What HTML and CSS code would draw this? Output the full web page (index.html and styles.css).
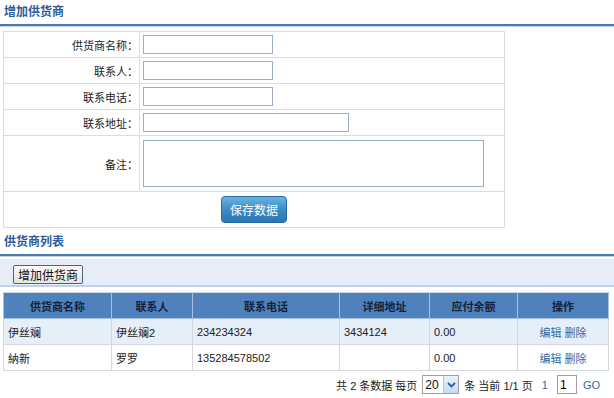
FILE: index.html
```html
<!DOCTYPE html>
<html lang="zh-CN">
<head>
    <meta charset="UTF-8">
    <title>供货商管理</title>
    <link rel="stylesheet" href="styles.css">
</head>
<body>
    <div class="section-title">增加供货商</div>
    <table class="form-table">
        <tr>
            <td class="label">供货商名称：</td>
            <td><input type="text" class="txt"></td>
        </tr>
        <tr>
            <td class="label">联系人：</td>
            <td><input type="text" class="txt"></td>
        </tr>
        <tr>
            <td class="label">联系电话：</td>
            <td><input type="text" class="txt"></td>
        </tr>
        <tr>
            <td class="label">联系地址：</td>
            <td><input type="text" class="txt txt-long"></td>
        </tr>
        <tr class="memo-row">
            <td class="label">备注：</td>
            <td><textarea class="memo"></textarea></td>
        </tr>
        <tr class="btn-row">
            <td colspan="2"><button class="btn-save">保存数据</button></td>
        </tr>
    </table>

    <div class="section-title second">供货商列表</div>
    <div class="toolbar">
        <button class="btn-add">增加供货商</button>
    </div>

    <table class="list-table">
        <thead>
            <tr>
                <th class="c1">供货商名称</th>
                <th class="c2">联系人</th>
                <th class="c3">联系电话</th>
                <th class="c4">详细地址</th>
                <th class="c5">应付余额</th>
                <th>操作</th>
            </tr>
        </thead>
        <tbody>
            <tr class="odd">
                <td>伊丝斓</td>
                <td>伊丝斓2</td>
                <td>234234324</td>
                <td>3434124</td>
                <td>0.00</td>
                <td class="ops"><a href="#">编辑</a> <a href="#">删除</a></td>
            </tr>
            <tr>
                <td>納新</td>
                <td>罗罗</td>
                <td>135284578502</td>
                <td></td>
                <td>0.00</td>
                <td class="ops"><a href="#">编辑</a> <a href="#">删除</a></td>
            </tr>
        </tbody>
    </table>

    <div class="pager">
        <span>共 2 条数据</span>
        <span>每页</span>
        <span class="select-wrap">
            <select class="page-size"><option>20</option></select>
            <span class="select-arrow">
                <svg width="9" height="6" viewBox="0 0 9 6"><path d="M1 1 L4.5 4.5 L8 1" fill="none" stroke="#2d5c9c" stroke-width="1.8"/></svg>
            </span>
        </span>
        <span>条</span>
        <span>当前 1/1 页</span>
        <a href="#" class="page-num">1</a>
        <input type="text" class="page-input" value="1">
        <a href="#" class="go">GO</a>
    </div>
</body>
</html>
```

FILE: styles.css
```css
body {
    margin: 0;
    padding: 0 5px 0 3px;
    background: #fff;
    font-family: "Liberation Sans", "Noto Sans CJK SC", sans-serif;
    font-size: 11px;
    color: #222;
}

.section-title {
    height: 24px;
    line-height: 24px;
    margin: 0 -5px 5px -3px;
    padding-left: 4px;
    font-size: 12px;
    font-weight: bold;
    color: #2d5c9c;
    border-bottom: 2px solid #4b78b4;
    box-shadow: 0 1px 0 #c5d5ea;
}
.section-title.second {
    margin-top: 2px;
    margin-bottom: 3px;
}

.form-table {
    width: 502px;
    border-collapse: collapse;
    border: 1px solid #d8d8d8;
}
.form-table td {
    border: 1px solid #dcdcdc;
    height: 25px;
    padding: 0 3px;
}
.form-table td.label {
    width: 131px;
    text-align: right;
    padding-right: 1px;
    color: #222;
}
.txt {
    box-sizing: border-box;
    width: 130px;
    height: 19px;
    border: 1px solid #9bb0c8;
    padding: 0 3px;
    display: block;
}
.txt-long {
    width: 206px;
}
.memo-row td {
    height: 55px;
}
.memo {
    box-sizing: border-box;
    display: block;
    width: 341px;
    height: 47px;
    border: 1px solid #9bb0c8;
    overflow-y: scroll;
    resize: none;
}
.btn-row td {
    height: 35px;
    text-align: center;
}
.btn-save {
    width: 66px;
    height: 27px;
    border: 1px solid #256aa2;
    border-radius: 4px;
    background: linear-gradient(180deg, #6cb4df 0%, #3c8cc6 50%, #2a77b3 100%);
    color: #fff;
    font-family: "Noto Sans CJK SC", sans-serif;
    font-size: 12px;
    padding: 0;
}

.toolbar {
    height: 28px;
    margin: 0 -5px 0 -3px;
    padding: 6px 0 0 13px;
    box-sizing: border-box;
    background: #e6edf6;
    border-bottom: 2px solid #c0d2e8;
}
.btn-add {
    width: 70px;
    height: 19px;
    padding: 0;
    border: 1px solid #4d6480;
    border-radius: 2px;
    background: linear-gradient(180deg, #fbfbfb, #e4e4e4);
    font-family: "Noto Sans CJK SC", sans-serif;
    font-size: 12px;
    color: #111;
    line-height: 15px;
}

.list-table {
    width: 606px;
    margin-top: 5px;
    border-collapse: collapse;
    table-layout: fixed;
    border: 1px solid #d4d8dd;
}
.list-table th {
    box-sizing: border-box;
    height: 26px;
    padding: 0;
    background: #4f81bd;
    color: #15233a;
    font-weight: bold;
    border: 1px solid #a6c0df;
    border-top-color: #d4d8dd;
}
.list-table td {
    height: 25px;
    padding: 0 4px;
    border: 1px solid #d4d8dd;
    white-space: nowrap;
}
.list-table tr.odd td {
    background: #e6eef8;
}
.c1 { width: 108px; }
.c2 { width: 81px; }
.c3 { width: 147px; }
.c4 { width: 90px; }
.c5 { width: 88px; }
.list-table td.ops {
    text-align: center;
}
.ops a {
    color: #2e6aaa;
    text-decoration: none;
}

.pager {
    display: flex;
    justify-content: flex-end;
    align-items: center;
    gap: 3px;
    height: 23px;
    padding-right: 9px;
    margin-top: 2px;
}
.select-wrap {
    position: relative;
    display: inline-block;
    margin: 0 2px;
}
.page-size {
    display: block;
    -webkit-appearance: none;
    appearance: none;
    width: 37px;
    height: 19px;
    font-family: "Liberation Sans", sans-serif;
    font-size: 12px;
    color: #111;
    border: 1px solid #a0a0a0;
    border-radius: 0;
    padding: 0 0 0 2px;
    background: #fff;
}
.select-arrow {
    position: absolute;
    top: 1px;
    right: 1px;
    width: 14px;
    height: 17px;
    display: flex;
    align-items: center;
    justify-content: center;
    background: linear-gradient(180deg, #eaf2fc, #c8daf2);
    border-left: 1px solid #b4c8e4;
    pointer-events: none;
}
.page-num {
    color: #2e6aaa;
    text-decoration: none;
    margin: 0 6px;
}
.page-input {
    box-sizing: border-box;
    width: 20px;
    height: 19px;
    border: 1px solid #a0a0a0;
    padding: 0 2px;
    font-size: 12px;
}
.go {
    color: #2e6aaa;
    text-decoration: none;
    margin-left: 3px;
}
```
